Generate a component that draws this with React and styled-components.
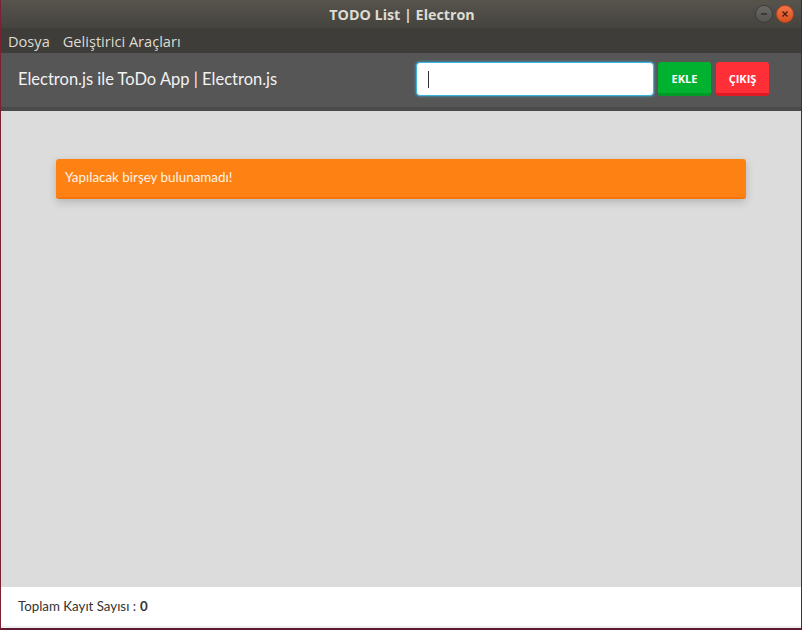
import React, { useState } from "react";
import styled, { createGlobalStyle } from "styled-components";

const GlobalStyle = createGlobalStyle`
  html, body {
    margin: 0;
    padding: 0;
    background: #2b2b2b;
  }
  * { box-sizing: border-box; }
`;

const Window = styled.div`
  width: 802px;
  height: 630px;
  display: flex;
  flex-direction: column;
  border-left: 1px solid #7a2233;
  border-right: 1px solid #6a1c2c;
  border-bottom: 2px solid #5e1a33;
  background: #dcdcdc;
  overflow: hidden;
`;

const TitleBar = styled.div`
  height: 28px;
  flex-shrink: 0;
  display: flex;
  align-items: center;
  justify-content: center;
  position: relative;
  background: linear-gradient(#57544e, #45433e);
  color: #dfdbd2;
  font-family: "Open Sans", "Noto Sans", sans-serif;
  font-weight: 700;
  font-size: 14.3px;
  padding-left: 2px;
`;

const WinButtons = styled.div`
  position: absolute;
  right: 7px;
  top: 5px;
  display: flex;
  gap: 3px;
`;

const WinButton = styled.div`
  width: 18px;
  height: 18px;
  border-radius: 50%;
  display: flex;
  align-items: center;
  justify-content: center;
  background: ${(p) => (p.close ? "linear-gradient(#f37649, #d9501f)" : "linear-gradient(#6b6965, #55534f)")};
  border: 1px solid ${(p) => (p.close ? "#b8441c" : "#3d3b38")};
`;

const MenuBar = styled.div`
  height: 25px;
  flex-shrink: 0;
  display: flex;
  align-items: center;
  gap: 13px;
  padding-left: 7px;
  background: #3e3d39;
  color: #dfdbd2;
  font-family: "Open Sans", "Noto Sans", sans-serif;
  font-size: 14.6px;
`;

const Header = styled.div`
  height: 58px;
  flex-shrink: 0;
  display: flex;
  align-items: center;
  padding: 0 32px 0 17px;
  background: #565656;
  border-bottom: 4px solid #4a4a4a;
`;

const Brand = styled.div`
  flex: 1;
  color: #f2f2f2;
  font-family: "Lato", "Open Sans", sans-serif;
  font-size: 16.5px;
  padding-bottom: 2px;
`;

const Form = styled.div`
  display: flex;
  align-items: center;
  gap: 4px;
  padding-bottom: 2px;
`;

const Field = styled.div`
  position: relative;
  display: flex;
`;

const Caret = styled.span`
  position: absolute;
  left: 12px;
  top: 9px;
  width: 1px;
  height: 17px;
  background: #333;
  pointer-events: none;
`;

const Input = styled.input`
  width: 238px;
  height: 34px;
  border-radius: 4px;
  border: 1px solid #3ab4dc;
  box-shadow: 0 0 3px #3ab4dc;
  background: #fff;
  padding: 0 12px;
  font-size: 16px;
  font-family: "Lato", sans-serif;
  outline: none;
  caret-color: transparent;
`;

const Button = styled.button`
  height: 34px;
  width: 53px;
  margin-left: ${(p) => (p.first ? "0" : "1px")};
  border: none;
  border-bottom: 3px solid ${(p) => (p.danger ? "#e01a22" : "#009a27")};
  border-radius: 3px;
  background: ${(p) => (p.danger ? "#ff2f37" : "#00b22f")};
  color: #fff;
  font-family: "Open Sans", sans-serif;
  font-weight: 700;
  font-size: 11px;
  cursor: pointer;
  padding: 2px 0 0;
`;

const Main = styled.div`
  flex: 1;
  padding: 48px 55px 0;
`;

const Alert = styled.div`
  height: 40px;
  display: flex;
  align-items: center;
  padding: 0 9px 2px;
  background: #fd8213;
  border-bottom: 2px solid #f5750a;
  border-radius: 3px;
  box-shadow: 0 3px 8px rgba(0, 0, 0, 0.18);
  color: #fff3e6;
  font-family: "Lato", "Open Sans", sans-serif;
  font-size: 13.4px;
`;

const Footer = styled.div`
  height: 41px;
  flex-shrink: 0;
  display: flex;
  align-items: center;
  padding: 0 17px 2px;
  background: #fff;
  border-bottom: 2px solid #eeeeee;
  color: #333;
  font-family: "Lato", "Open Sans", sans-serif;
  font-size: 13.3px;
  b { margin-left: 4px; }
`;

export default function App() {
  const [task, setTask] = useState("");
  const [tasks] = useState([]);

  return (
    <>
      <GlobalStyle />
      <Window>
        <TitleBar>
          TODO List | Electron
          <WinButtons>
            <WinButton>
              <svg width="8" height="8" viewBox="0 0 8 8">
                <path d="M1 4h6" stroke="#2e2d2a" strokeWidth="1.4" />
              </svg>
            </WinButton>
            <WinButton close>
              <svg width="8" height="8" viewBox="0 0 8 8">
                <path d="M1.5 1.5l5 5M6.5 1.5l-5 5" stroke="#4a1a0a" strokeWidth="1.3" />
              </svg>
            </WinButton>
          </WinButtons>
        </TitleBar>
        <MenuBar>
          <span>Dosya</span>
          <span>Geliştirici Araçları</span>
        </MenuBar>
        <Header>
          <Brand>Electron.js ile ToDo App | Electron.js</Brand>
          <Form>
            <Field>
              <Input value={task} onChange={(e) => setTask(e.target.value)} />
              {task === "" && <Caret />}
            </Field>
            <Button first>EKLE</Button>
            <Button danger>ÇIKIŞ</Button>
          </Form>
        </Header>
        <Main>
          {tasks.length === 0 && <Alert>Yapılacak birşey bulunamadı!</Alert>}
        </Main>
        <Footer>
          Toplam Kayıt Sayısı :<b>{tasks.length}</b>
        </Footer>
      </Window>
    </>
  );
}
